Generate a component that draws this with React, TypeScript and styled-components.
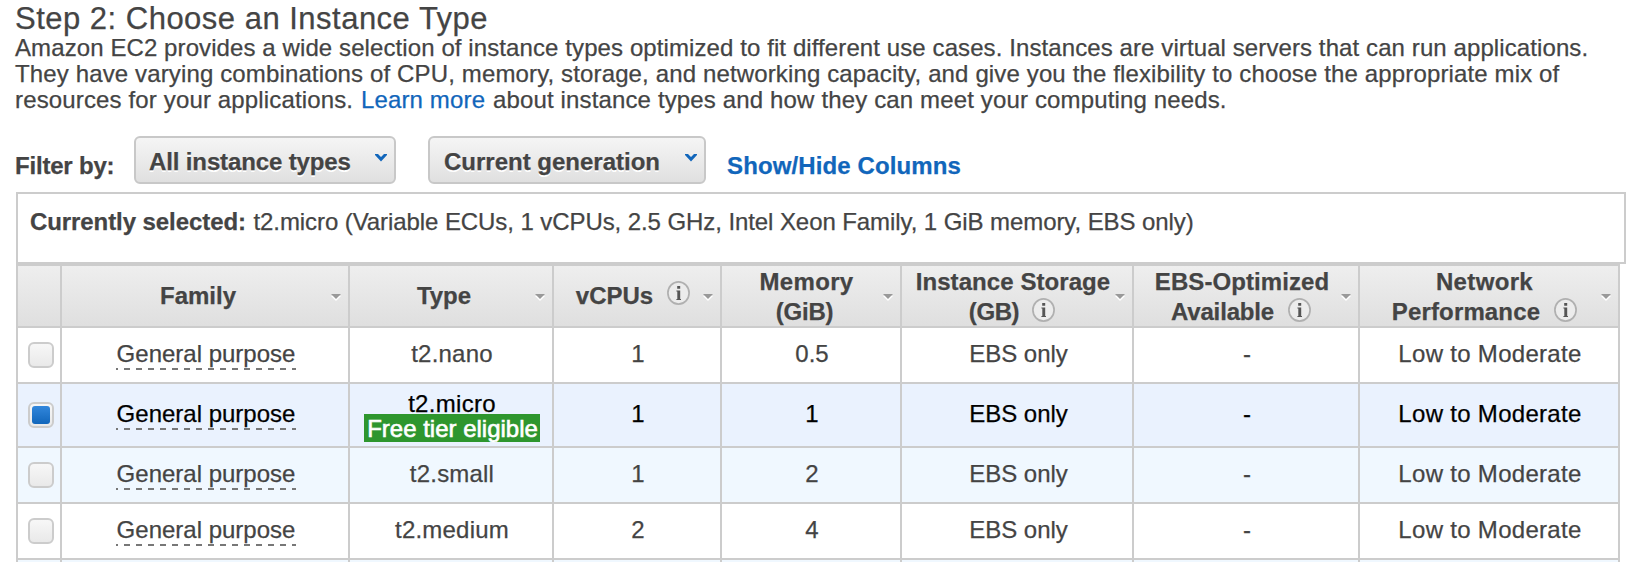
import React from 'react';
import styled, { createGlobalStyle } from 'styled-components';

const GlobalStyle = createGlobalStyle`
  body { margin: 0; background: #fff; }
  * { box-sizing: border-box; }
`;

const Page = styled.main`
  width: 1636px;
  height: 562px;
  overflow: hidden;
  padding: 3px 10px 0 16px;
  background: #fff;
  color: #444;
  font-family: 'Liberation Sans', Arial, sans-serif;
  font-size: 24px;
  line-height: 26px;
  -webkit-text-stroke: 0.25px currentColor;
`;

const Title = styled.h1`
  margin: 0 0 0 -1px;
  font-size: 31px;
  line-height: 32px;
  font-weight: 400;
  letter-spacing: 0.49px;
  white-space: nowrap;
`;

const Intro = styled.p`
  margin: 0 0 0 -1px;
`;

const Line = styled.span<{ $ls: number }>`
  display: block;
  white-space: nowrap;
  letter-spacing: ${(p) => p.$ls}px;
`;

const Link = styled.a`
  color: #1166bb;
`;

const LearnMore = styled(Link)`
  margin: 0 1px;
`;

const FilterBar = styled.div`
  display: flex;
  align-items: flex-start;
  height: 79px;
  padding-top: 23px;
  font-weight: 700;
  white-space: nowrap;
`;

const FilterLabel = styled.span`
  width: 119px;
  margin-left: -1px;
  padding-top: 17px;
  letter-spacing: -0.2px;
`;

const Dropdown = styled.button<{ $w: number; $ls: number; $gap: number; $inset: number }>`
  display: flex;
  align-items: center;
  justify-content: space-between;
  width: ${(p) => p.$w}px;
  height: 48px;
  margin-right: ${(p) => p.$gap}px;
  padding: 3px 7px 0 ${(p) => p.$inset}px;
  border: 2px solid #c8c8c8;
  border-radius: 6px;
  background: linear-gradient(#f5f5f5, #e0e0e0);
  color: #444;
  font: inherit;
  letter-spacing: ${(p) => p.$ls}px;
  text-shadow: 0 2px 0 #fff;

  svg {
    margin-bottom: 7px;
  }
`;

const ColumnsLink = styled(Link)`
  padding-top: 17px;
  letter-spacing: 0.12px;
`;

const Selected = styled.div`
  height: 72px;
  padding: 15px 12px;
  border: 2px solid #ccc;
  letter-spacing: -0.08px;
  white-space: nowrap;

  b {
    margin-right: 1px;
  }
`;

const Grid = styled.div`
  width: 1604px;
  border: 2px solid #ccc;
  border-bottom: 0;
`;

const Row = styled.div<{ $h: number; $tone?: 'head' | 'selected' | 'alt' }>`
  display: grid;
  grid-template-columns: 44px 288px 204px 168px 180px 232px 226px 258px;
  height: ${(p) => p.$h}px;
  background: ${(p) =>
    p.$tone === 'head'
      ? 'linear-gradient(#eeeeee, #dfdfdf)'
      : p.$tone === 'selected'
        ? '#eaf2fe'
        : p.$tone === 'alt'
          ? '#f0f8ff'
          : '#fff'};
  color: ${(p) => (p.$tone === 'selected' ? '#000' : '#444')};
  border-bottom: 2px solid #ccc;
`;

const Cell = styled.div`
  display: flex;
  flex-direction: column;
  align-items: center;
  justify-content: center;
  padding: 0 0 2px 2px;
  border-right: 2px solid #ccc;
  white-space: nowrap;

  &:first-child {
    padding: 0;
  }
  &:last-child {
    border-right: 0;
  }
`;

const TierCell = styled(Cell)`
  justify-content: flex-end;
  padding-bottom: 4px;
`;

const Text = styled.span<{ $ls?: number }>`
  letter-spacing: ${(p) => p.$ls ?? 0}px;
`;

const StorageText = styled(Text)`
  margin-left: 1px;
`;

const TierType = styled(Text)`
  margin-bottom: -3px;
`;

const Family = styled(Text)`
  width: 180px;
  height: 29px;
  margin-top: 3px;
  text-align: center;
  background: repeating-linear-gradient(90deg, #777 0 6px, transparent 6px 12px) -4px 100% / 200% 2px no-repeat;
`;

const Check = styled.span`
  display: grid;
  place-items: center;
  width: 26px;
  height: 26px;
  margin: 0 0 0 4px;
  border: 2px solid #ccc;
  border-radius: 6px;
  background: linear-gradient(#f7f7f7, #e9e9e9);
`;

const CheckFill = styled.span`
  width: 18px;
  height: 18px;
  border-radius: 3px;
  background: linear-gradient(#3287dc, #1166bb);
`;

const Badge = styled.span`
  width: 176px;
  height: 28px;
  padding: 2px 0 0 1px;
  text-align: center;
  background: #2e962e;
  color: #fff;
  -webkit-text-stroke: 0.6px #fff;
`;

const HeadCell = styled(Cell)<{ $two: boolean }>`
  position: relative;
  font-weight: 700;
  line-height: 30px;
  padding: ${(p) => (p.$two ? '1px 14px 0 0' : '0 14px 2px 0')};
`;

const HeadLine = styled.span<{ $ls?: number; $x?: number; $gap?: number }>`
  display: flex;
  flex: none;
  align-items: center;
  gap: ${(p) => p.$gap ?? 14}px;
  height: 30px;
  margin-left: ${(p) => p.$x ?? 0}px;
  letter-spacing: ${(p) => p.$ls ?? 0}px;

  svg {
    flex: none;
    margin-bottom: 5px;
  }
`;

const SortMark = styled.svg`
  position: absolute;
  right: 7px;
  top: 28px;
`;

const Chevron = () => (
  <svg width="12" height="8" viewBox="0 0 12 8">
    <path d="M0 0h3l3 3 3-3h3v1L6 7.5 0 1z" fill="#1166bb" />
  </svg>
);

const Info = () => (
  <svg width="23" height="24" viewBox="0 0 23 24">
    <ellipse cx="11.5" cy="12" rx="10.6" ry="11.1" fill="#ececec" stroke="#b0b0b0" strokeWidth="1.7" />
    <path d="M10.2 5h3v2.8h-3zM9.4 9.4h3.8V18h.8v1H9.4v-1h.9v-7.4h-.9z" fill="#555" />
  </svg>
);

type HeadLineSpec = { text: string; ls?: number; x?: number; gap?: number; info?: boolean };

const heads: HeadLineSpec[][] = [
  [],
  [{ text: 'Family' }],
  [{ text: 'Type' }],
  [{ text: 'vCPUs', x: 6, info: true }],
  [{ text: 'Memory', ls: 0.35, x: 5 }, { text: '(GiB)', ls: -0.2, x: 1 }],
  [{ text: 'Instance Storage', ls: 0.07, x: 6 }, { text: '(GB)', ls: -0.4, x: 4, gap: 13, info: true }],
  [{ text: 'EBS-Optimized', ls: 0.08, x: 6 }, { text: 'Available', ls: -0.15, x: 4, info: true }],
  [{ text: 'Network', ls: 0.35, x: 5 }, { text: 'Performance', ls: 0.15, x: 5, info: true }],
];

const rows = [
  { type: 't2.nano', ls: 0.2, cpus: '1', memory: '0.5', height: 56 },
  { type: 't2.micro', ls: 0.3, cpus: '1', memory: '1', height: 64, tone: 'selected' as const, free: true },
  { type: 't2.small', ls: 0.2, cpus: '1', memory: '2', height: 56, tone: 'alt' as const },
  { type: 't2.medium', ls: 0.2, cpus: '2', memory: '4', height: 56 },
  { type: '', cpus: '', memory: '', height: 56, tone: 'alt' as const },
];

export default function App() {
  return (
    <Page>
      <GlobalStyle />
      <Title>Step 2: Choose an Instance Type</Title>
      <Intro>
        <Line $ls={0.095}>
          Amazon EC2 provides a wide selection of instance types optimized to fit different use cases. Instances are virtual servers that can run applications.
        </Line>
        <Line $ls={0.135}>
          They have varying combinations of CPU, memory, storage, and networking capacity, and give you the flexibility to choose the appropriate mix of
        </Line>
        <Line $ls={0.145}>
          resources for your applications. <LearnMore>Learn more</LearnMore> about instance types and how they can meet your computing needs.
        </Line>
      </Intro>
      <FilterBar>
        <FilterLabel>Filter by:</FilterLabel>
        <Dropdown $w={262} $ls={-0.13} $gap={32} $inset={13}>
          All instance types
          <Chevron />
        </Dropdown>
        <Dropdown $w={278} $ls={0} $gap={21} $inset={14}>
          Current generation
          <Chevron />
        </Dropdown>
        <ColumnsLink>Show/Hide Columns</ColumnsLink>
      </FilterBar>
      <Selected>
        <b>Currently selected:</b> t2.micro (Variable ECUs, 1 vCPUs, 2.5 GHz, Intel Xeon Family, 1 GiB memory, EBS only)
      </Selected>
      <Grid>
        <Row $h={62} $tone="head">
          {heads.map((lines, i) => (
            <HeadCell key={i} $two={lines.length > 1}>
              {lines.map((l) => (
                <HeadLine key={l.text} $ls={l.ls} $x={l.x} $gap={l.gap}>
                  {l.text}
                  {l.info && <Info />}
                </HeadLine>
              ))}
              {lines.length > 0 && (
                <SortMark width="10" height="7" viewBox="0 0 10 7">
                  <path d="M0 2h10L5 7z" fill="#fff" />
                  <path d="M0 0h10L5 5z" fill="#999" />
                </SortMark>
              )}
            </HeadCell>
          ))}
        </Row>
        {rows.map((r, i) => (
          <Row key={i} $h={r.height} $tone={r.tone}>
            <Cell>
              <Check>{r.free && <CheckFill />}</Check>
            </Cell>
            {r.type ? (
              <>
                <Cell><Family>General purpose</Family></Cell>
                {r.free ? (
                  <TierCell>
                    <TierType $ls={r.ls}>{r.type}</TierType>
                    <Badge>Free tier eligible</Badge>
                  </TierCell>
                ) : (
                  <Cell><Text $ls={r.ls}>{r.type}</Text></Cell>
                )}
                <Cell>{r.cpus}</Cell>
                <Cell>{r.memory}</Cell>
                <Cell><StorageText>EBS only</StorageText></Cell>
                <Cell>-</Cell>
                <Cell><Text $ls={0.3}>Low to Moderate</Text></Cell>
              </>
            ) : (
              heads.slice(1).map((_, c) => <Cell key={c} />)
            )}
          </Row>
        ))}
      </Grid>
    </Page>
  );
}
